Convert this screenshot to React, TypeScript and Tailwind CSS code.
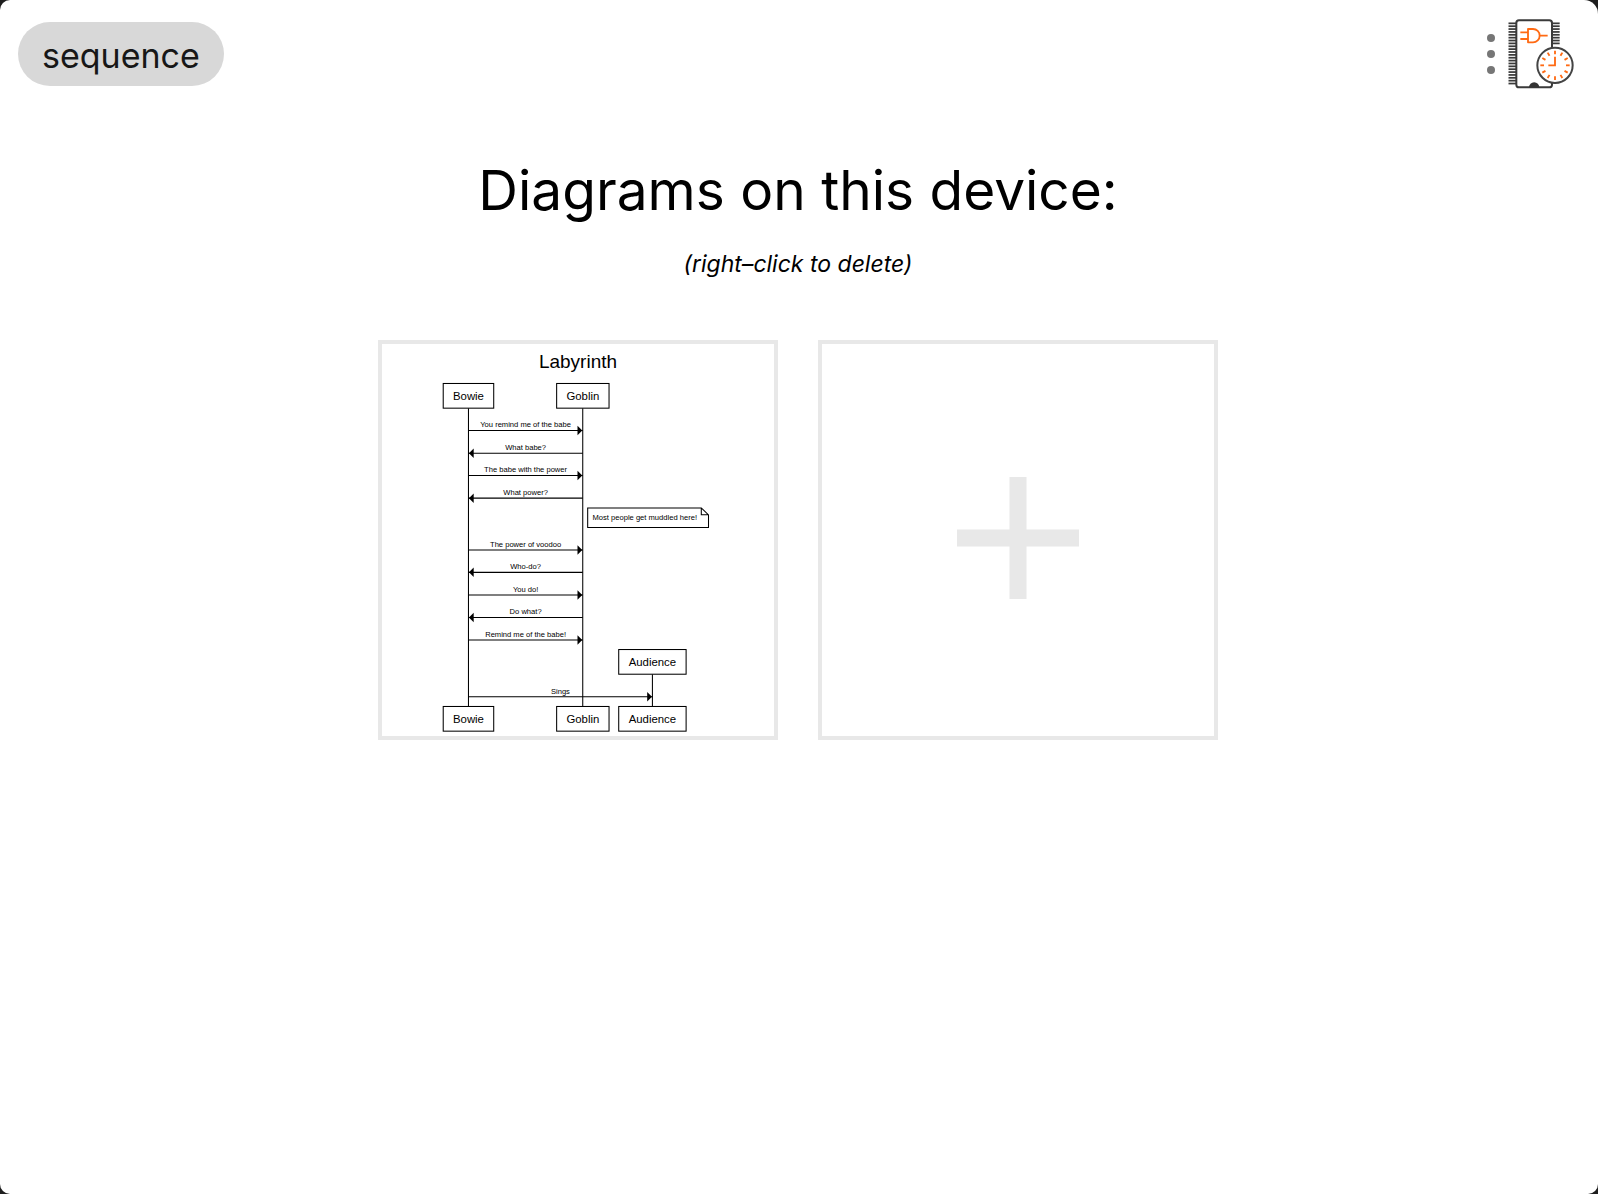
import React from "react";

const INK = "#000";

type Box = { name: string; x: number; y: number; w: number };
const boxes: Box[] = [
  { name: "Bowie", x: 64.5, y: 41.6, w: 53.2 },
  { name: "Goblin", x: 184, y: 41.6, w: 55.2 },
  { name: "Audience", x: 249.4, y: 321.9, w: 71 },
  { name: "Bowie", x: 64.5, y: 381.9, w: 53.2 },
  { name: "Goblin", x: 184, y: 381.9, w: 55.2 },
  { name: "Audience", x: 249.4, y: 381.9, w: 71 },
];

const BOWIE = 91.1;
const GOBLIN = 211.5;
const AUDIENCE = 284.9;

type Message = { text: string; from: number; to: number; y: number };
const messages: Message[] = [
  { text: "You remind me of the babe", from: BOWIE, to: GOBLIN, y: 91.1 },
  { text: "What babe?", from: GOBLIN, to: BOWIE, y: 115 },
  { text: "The babe with the power", from: BOWIE, to: GOBLIN, y: 138.6 },
  { text: "What power?", from: GOBLIN, to: BOWIE, y: 162.4 },
  { text: "The power of voodoo", from: BOWIE, to: GOBLIN, y: 217 },
  { text: "Who-do?", from: GOBLIN, to: BOWIE, y: 240.6 },
  { text: "You do!", from: BOWIE, to: GOBLIN, y: 264.4 },
  { text: "Do what?", from: GOBLIN, to: BOWIE, y: 288.2 },
  { text: "Remind me of the babe!", from: BOWIE, to: GOBLIN, y: 311.9 },
  { text: "Sings", from: BOWIE, to: AUDIENCE, y: 371.7 },
];

function SequenceDiagram() {
  return (
    <svg
      viewBox="0 0 413 413"
      className="block h-full w-full font-['Liberation_Sans',Arial,sans-serif]"
      role="img"
      aria-label="Labyrinth"
    >
      <text x="206.5" y="25.6" fontSize="20" textAnchor="middle">
        Labyrinth
      </text>
      <g stroke={INK} strokeWidth="1.1">
        <path d={`M${BOWIE} 67.6V382M${GOBLIN} 67.6V382M${AUDIENCE} 348V382`} />
      </g>
      {boxes.map((b, i) => (
        <g key={i}>
          <rect x={b.x} y={b.y} width={b.w} height="26" fill="#fff" stroke={INK} strokeWidth="1.1" />
          <text x={b.x + b.w / 2} y={b.y + 17.2} fontSize="12" textAnchor="middle">
            {b.name}
          </text>
        </g>
      ))}
      {messages.map((m) => {
        const d = m.to > m.from ? -1 : 1;
        return (
          <g key={m.text}>
            <path d={`M${m.from} ${m.y}H${m.to}`} stroke={INK} strokeWidth="1.1" />
            <path d={`M${m.to + d * 0.5} ${m.y}l${d * 5} -5v10z`} fill={INK} />
            <text x={(m.from + m.to) / 2} y={m.y - 3.4} fontSize="8" textAnchor="middle">
              {m.text}
            </text>
          </g>
        );
      })}
      <path
        d="M216.7 172.7H336.4L344 180V193.4H216.7ZM336.4 172.7V180H344"
        fill="#fff"
        stroke={INK}
        strokeWidth="1.1"
      />
      <text x="221.8" y="185.4" fontSize="8">
        Most people get muddled here!
      </text>
    </svg>
  );
}

const leftPins = Array.from({ length: 22 }, (_, i) => 70 + i * 8.6);
const rightPins = Array.from({ length: 8 }, (_, i) => 70 + i * 8.6);
const ticks = Array.from({ length: 12 }, (_, i) => i * 30);

function ChipClockLogo() {
  return (
    <svg viewBox="114 54 201 216" className="h-[72px] w-[67px]" aria-hidden="true">
      <g stroke="#3a3a3a" strokeWidth="5.2">
        {leftPins.map((y) => (
          <path key={y} d={`M115.5 ${y}H139`} />
        ))}
        {rightPins.map((y) => (
          <path key={y} d={`M246 ${y}H269`} />
        ))}
      </g>
      <rect x="139" y="61" width="107" height="201" rx="8" fill="#fff" stroke="#3a3a3a" strokeWidth="6" />
      <path d="M177 262a15.5 15.5 0 0 1 31 0z" fill="#333" />
      <g fill="none" stroke="#ff6a13" strokeWidth="5.5" strokeLinejoin="round">
        <path d="M174 87H189a20 20 0 0 1 0 40H174ZM151 97H174M151 117H174M209 107H233" />
      </g>
      <circle cx="255" cy="196" r="53" fill="#fff" stroke="#444" strokeWidth="6" />
      <g fill="none" stroke="#ff6a13" strokeWidth="5.5">
        {ticks.map((a) => (
          <path key={a} d="M255 152V163" transform={`rotate(${a} 255 196)`} />
        ))}
        <path d="M255 170V196H235" />
      </g>
    </svg>
  );
}

export default function App() {
  return (
    <div className="min-h-screen bg-[#1e1e1e]">
      <div className="flex min-h-screen flex-col rounded-[10px] rounded-tr-[14px] bg-white font-[Inter,sans-serif] text-black">
        <header className="flex items-start justify-between pt-[18px] pr-[23px] pl-[18px]">
          <button
            type="button"
            className="mt-1 h-16 rounded-full bg-[#d8d8d8] px-6 pt-1 text-[34px] leading-[60px] text-[#171717]"
          >
            sequence
          </button>
          <div className="flex items-center gap-[13px]">
            <button type="button" aria-label="Menu" className="flex flex-col gap-2">
              <span className="size-2 rounded-full bg-[#767676]" />
              <span className="size-2 rounded-full bg-[#767676]" />
              <span className="size-2 rounded-full bg-[#767676]" />
            </button>
            <ChipClockLogo />
          </div>
        </header>
        <main className="flex flex-col items-center pt-16 pr-0.5">
          <h1 className="text-[55px] leading-[72px]">Diagrams on this device:</h1>
          <p className="mt-[22px] text-[23px] leading-8 italic">(right–click to delete)</p>
          <div className="mt-[60px] flex flex-wrap justify-center gap-10">
            <a href="#labyrinth" className="block size-[400px] border-4 border-[#e8e8e8]">
              <SequenceDiagram />
            </a>
            <button
              type="button"
              aria-label="New diagram"
              className="flex size-[400px] items-center justify-center border-4 border-[#e8e8e8] pb-1"
            >
              <svg viewBox="0 0 122 122" className="size-[122px]" aria-hidden="true">
                <path d="M52.5 0h17v52.5H122v17H69.5V122h-17V69.5H0v-17h52.5z" fill="#e8e8e8" />
              </svg>
            </button>
          </div>
        </main>
      </div>
    </div>
  );
}
